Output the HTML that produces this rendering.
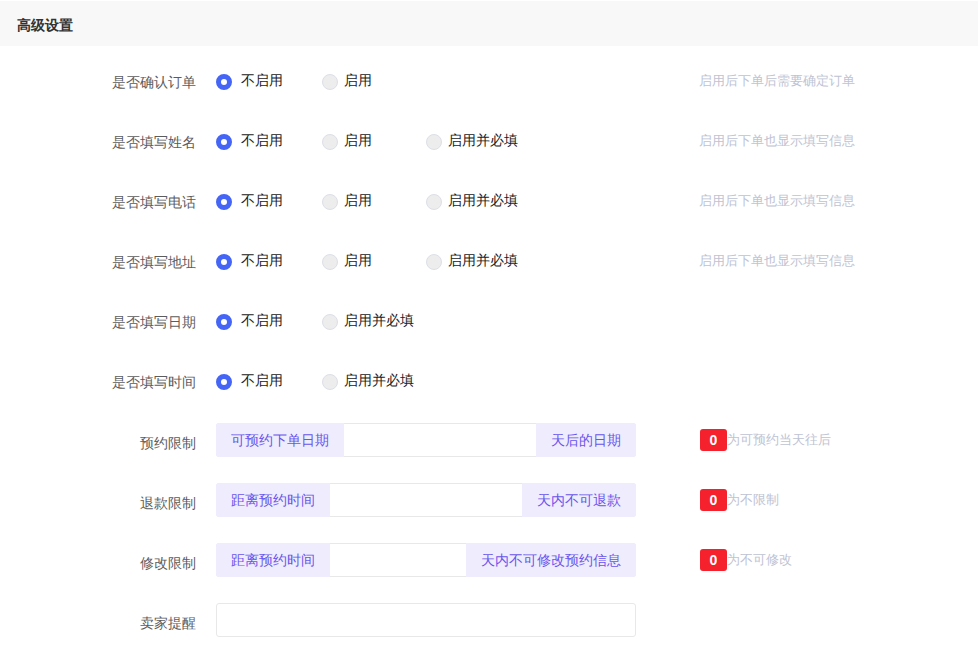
<!DOCTYPE html>
<html><head><meta charset="utf-8">
<style>
*{box-sizing:border-box;margin:0;padding:0}
html,body{width:978px;height:651px;overflow:hidden;background:#fff;font-family:"Liberation Sans",sans-serif;font-size:14px}
.hdr{position:absolute;left:0;top:1px;width:978px;height:45px;background:#f8f8f8}
.hdr span{position:absolute;left:17px;top:14px;font-weight:bold;color:#333;font-size:14px;line-height:20px}
.lbl{position:absolute;right:782px;color:#5c5c5c;line-height:20px;white-space:nowrap}
.r{position:absolute;width:16px;height:16px;border-radius:50%}
.r.on{background:#fff;border:5px solid #4465f5}
.r.off{background:#ededed;border:1px solid #dcdfe6}
.t{position:absolute;color:#222;line-height:20px;white-space:nowrap}
.hint{position:absolute;left:699px;margin-top:1px;color:#bec3d3;line-height:20px;white-space:nowrap;font-size:13px}
.grp{position:absolute;left:216px;width:420px;height:34px;border:1px solid #e8e8e8;border-radius:3px;background:#fff}
.pre,.app{position:absolute;top:-1px;height:34px;background:#efecfd;color:#6a55ec;line-height:34px;padding:0 15px;white-space:nowrap}
.pre{left:-1px;border-radius:3px 0 0 3px}
.app{right:-1px;border-radius:0 3px 3px 0}
.badge{position:absolute;left:700px;width:27px;height:22px;background:#f5222d;color:#fff;font-weight:bold;text-align:center;line-height:22px;border-radius:3px;font-size:14px}
.bt{position:absolute;left:727px;color:#bec3d3;line-height:20px;white-space:nowrap;font-size:13px}
</style></head><body>
<div class="hdr"><span>高级设置</span></div>

<div class="lbl" style="top:72px">是否确认订单</div>
<div class="r on" style="left:216px;top:74px"></div><div class="t" style="left:241px;top:70px">不启用</div>
<div class="r off" style="left:322px;top:74px"></div><div class="t" style="left:344px;top:70px">启用</div>
<div class="hint" style="top:70px">启用后下单后需要确定订单</div>

<div class="lbl" style="top:132px">是否填写姓名</div>
<div class="r on" style="left:216px;top:134px"></div><div class="t" style="left:241px;top:130px">不启用</div>
<div class="r off" style="left:322px;top:134px"></div><div class="t" style="left:344px;top:130px">启用</div>
<div class="r off" style="left:426px;top:134px"></div><div class="t" style="left:448px;top:130px">启用并必填</div>
<div class="hint" style="top:130px">启用后下单也显示填写信息</div>

<div class="lbl" style="top:192px">是否填写电话</div>
<div class="r on" style="left:216px;top:194px"></div><div class="t" style="left:241px;top:190px">不启用</div>
<div class="r off" style="left:322px;top:194px"></div><div class="t" style="left:344px;top:190px">启用</div>
<div class="r off" style="left:426px;top:194px"></div><div class="t" style="left:448px;top:190px">启用并必填</div>
<div class="hint" style="top:190px">启用后下单也显示填写信息</div>

<div class="lbl" style="top:252px">是否填写地址</div>
<div class="r on" style="left:216px;top:254px"></div><div class="t" style="left:241px;top:250px">不启用</div>
<div class="r off" style="left:322px;top:254px"></div><div class="t" style="left:344px;top:250px">启用</div>
<div class="r off" style="left:426px;top:254px"></div><div class="t" style="left:448px;top:250px">启用并必填</div>
<div class="hint" style="top:250px">启用后下单也显示填写信息</div>

<div class="lbl" style="top:312px">是否填写日期</div>
<div class="r on" style="left:216px;top:314px"></div><div class="t" style="left:241px;top:310px">不启用</div>
<div class="r off" style="left:322px;top:314px"></div><div class="t" style="left:344px;top:310px">启用并必填</div>

<div class="lbl" style="top:372px">是否填写时间</div>
<div class="r on" style="left:216px;top:374px"></div><div class="t" style="left:241px;top:370px">不启用</div>
<div class="r off" style="left:322px;top:374px"></div><div class="t" style="left:344px;top:370px">启用并必填</div>

<div class="lbl" style="top:433px">预约限制</div>
<div class="grp" style="top:423px"><div class="pre">可预约下单日期</div><div class="app">天后的日期</div></div>
<div class="badge" style="top:429px">0</div><div class="bt" style="top:430px">为可预约当天往后</div>

<div class="lbl" style="top:493px">退款限制</div>
<div class="grp" style="top:483px"><div class="pre">距离预约时间</div><div class="app">天内不可退款</div></div>
<div class="badge" style="top:489px">0</div><div class="bt" style="top:490px">为不限制</div>

<div class="lbl" style="top:553px">修改限制</div>
<div class="grp" style="top:543px"><div class="pre">距离预约时间</div><div class="app">天内不可修改预约信息</div></div>
<div class="badge" style="top:549px">0</div><div class="bt" style="top:550px">为不可修改</div>

<div class="lbl" style="top:613px">卖家提醒</div>
<div class="grp" style="top:603px"></div>
</body></html>
